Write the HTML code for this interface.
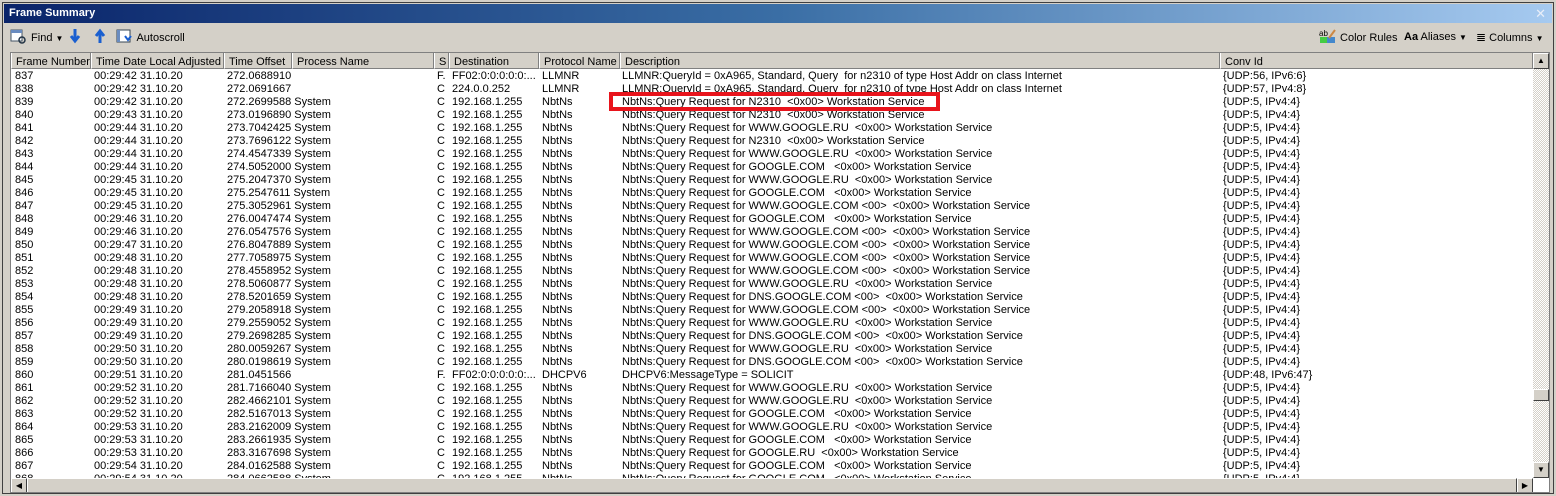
<!DOCTYPE html>
<html><head><meta charset="utf-8"><style>
*{margin:0;padding:0;box-sizing:border-box}
body{width:1556px;height:496px;background:#d4d0c8;font-family:"Liberation Sans",Tahoma,sans-serif;font-size:11px;color:#000;position:relative;overflow:hidden}
.outer{position:absolute;left:2px;top:2px;width:1552px;height:492px;border:1px solid #404040;background:#d4d0c8}
.title{position:absolute;left:4px;top:4px;width:1548px;height:19px;background:linear-gradient(to right,#0a246a,#3a6ea5 50%,#a6caf0);color:#fff;font-weight:bold;font-size:11px;line-height:19px;padding-left:5px}
.title .x{position:absolute;right:6px;top:0;font-weight:normal;font-size:13px;color:#e8eef8}
.tb{position:absolute;top:28px;height:18px;line-height:18px;font-size:11px}
.grid{position:absolute;left:10px;top:52px;width:1540px;height:441px;border:1px solid #808080;background:#fff;overflow:hidden}
.hdr{position:absolute;left:0;top:0;height:16px;width:1522px;background:#d4d0c8}
.hc{position:absolute;top:0;height:16px;line-height:18px;padding-left:4px;border-left:1px solid #fff;border-right:1px solid #808080;border-bottom:1px solid #808080;white-space:nowrap;overflow:hidden}
.row{position:absolute;left:0;height:13px;line-height:13px;white-space:nowrap}
.row span{position:absolute;top:0;white-space:nowrap}
.vs{position:absolute;left:1522px;top:0;width:16px;height:425px;background:repeating-conic-gradient(#d4d0c8 0 25%,#fff 0 50%) 0 0/2px 2px}
.btn{position:absolute;width:16px;height:16px;background:#d4d0c8;border:1px solid;border-color:#fff #404040 #404040 #fff}
.hs{position:absolute;left:0;top:425px;width:1522px;height:16px;background:#d4d0c8}
.red{position:absolute;left:609px;top:92px;width:331px;height:19px;border:4px solid #e8141c}
</style></head><body>
<div class="outer"></div>
<div class="title">Frame Summary<span class="x">✕</span></div>
<div class="tb" style="left:10px"><svg width="18" height="16" style="vertical-align:-3px"><rect x="1" y="2" width="11" height="11" fill="#fff" stroke="#456"/><rect x="1" y="2" width="11" height="3" fill="#6a8cc0"/><circle cx="12" cy="12" r="3" fill="none" stroke="#234" stroke-width="1.5"/></svg> Find <span style="font-size:8px">▼</span></div>
<div class="tb" style="left:68px"><svg width="14" height="16"><path d="M7 1v11M3 8l4 5 4-5" stroke="#1a5fd0" stroke-width="3" fill="none"/></svg></div>
<div class="tb" style="left:93px"><svg width="14" height="16"><path d="M7 15V4M3 8l4-5 4 5" stroke="#1a5fd0" stroke-width="3" fill="none"/></svg></div>
<div class="tb" style="left:116px"><svg width="18" height="16" style="vertical-align:-3px"><rect x="1" y="2" width="13" height="12" fill="#fff" stroke="#345"/><rect x="1" y="2" width="3" height="12" fill="#6a8cc0"/><path d="M9 8l3 4 3-4" stroke="#1a5fd0" stroke-width="2" fill="none"/></svg> Autoscroll</div>
<div class="tb" style="left:1319px"><svg width="18" height="16" style="vertical-align:-3px"><text x="0" y="8" font-size="8" fill="#000">ab</text><rect x="1" y="9" width="7" height="6" fill="#4c4"/><rect x="8" y="9" width="8" height="6" fill="#48c"/><path d="M10 10l6-8" stroke="#c84" stroke-width="2"/></svg> Color Rules</div>
<div class="tb" style="left:1404px"><span style="font-weight:bold;font-size:11px">Aa</span> Aliases <span style="font-size:8px">▼</span></div>
<div class="tb" style="left:1476px"><span style="font-size:12px">≣</span> Columns <span style="font-size:8px">▼</span></div>
<div class="grid">
<div class="hdr">
<div class="hc" style="left:0;width:80px">Frame Number</div>
<div class="hc" style="left:80px;width:133px">Time Date Local Adjusted</div>
<div class="hc" style="left:213px;width:68px">Time Offset</div>
<div class="hc" style="left:281px;width:142px">Process Name</div>
<div class="hc" style="left:423px;width:15px">S</div>
<div class="hc" style="left:438px;width:90px">Destination</div>
<div class="hc" style="left:528px;width:81px">Protocol Name</div>
<div class="hc" style="left:609px;width:600px">Description</div>
<div class="hc" style="left:1209px;width:313px">Conv Id</div>
</div>
<div id="rows"></div>
<div class="vs"><div class="btn" style="top:0;left:0;font-size:8px;text-align:center;line-height:14px">▲</div><div class="btn" style="top:336px;left:0;height:12px"></div><div class="btn" style="top:409px;left:0;font-size:8px;text-align:center;line-height:14px">▼</div></div>
<div class="hs"><div class="btn" style="left:0;top:0;font-size:8px;text-align:center;line-height:14px">◀</div><div class="btn" style="left:16px;top:0;width:1490px"></div><div class="btn" style="left:1506px;top:0;font-size:8px;text-align:center;line-height:14px">▶</div></div>
</div>
<div class="red"></div>
<script>
var L="LLMNR:QueryId = 0xA965, Standard, Query  for n2310 of type Host Addr on class Internet";
function q(n){return "NbtNs:Query Request for "+n+"  <0x00> Workstation Service";}
var d=[
["837","42","272.0688910","","F.","FF02:0:0:0:0:0:...","LLMNR",L,"{UDP:56, IPv6:6}"],
["838","42","272.0691667","","C","224.0.0.252","LLMNR",L,"{UDP:57, IPv4:8}"]];
var n=[["839","42","272.2699588","N2310"],["840","43","273.0196890","N2310"],["841","44","273.7042425","WWW.GOOGLE.RU"],["842","44","273.7696122","N2310"],["843","44","274.4547339","WWW.GOOGLE.RU"],["844","44","274.5052000","GOOGLE.COM "],["845","45","275.2047370","WWW.GOOGLE.RU"],["846","45","275.2547611","GOOGLE.COM "],["847","45","275.3052961","WWW.GOOGLE.COM <00>"],["848","46","276.0047474","GOOGLE.COM "],["849","46","276.0547576","WWW.GOOGLE.COM <00>"],["850","47","276.8047889","WWW.GOOGLE.COM <00>"],["851","48","277.7058975","WWW.GOOGLE.COM <00>"],["852","48","278.4558952","WWW.GOOGLE.COM <00>"],["853","48","278.5060877","WWW.GOOGLE.RU"],["854","48","278.5201659","DNS.GOOGLE.COM <00>"],["855","49","279.2058918","WWW.GOOGLE.COM <00>"],["856","49","279.2559052","WWW.GOOGLE.RU"],["857","49","279.2698285","DNS.GOOGLE.COM <00>"],["858","50","280.0059267","WWW.GOOGLE.RU"],["859","50","280.0198619","DNS.GOOGLE.COM <00>"],null,["861","52","281.7166040","WWW.GOOGLE.RU"],["862","52","282.4662101","WWW.GOOGLE.RU"],["863","52","282.5167013","GOOGLE.COM "],["864","53","283.2162009","WWW.GOOGLE.RU"],["865","53","283.2661935","GOOGLE.COM "],["866","53","283.3167698","GOOGLE.RU"],["867","54","284.0162588","GOOGLE.COM "],["868","54","284.0662588","GOOGLE.COM "]];
n.forEach(function(r){if(!r)d.push(["860","51","281.0451566","","F.","FF02:0:0:0:0:0:...","DHCPV6","DHCPV6:MessageType = SOLICIT","{UDP:48, IPv6:47}"]);else d.push([r[0],r[1],r[2],"System","C","192.168.1.255","NbtNs",q(r[3]),"{UDP:5, IPv4:4}"]);});
var xs=[4,83,216,283,426,441,531,611,1212],h="";
d.forEach(function(r,i){h+='<div class="row" style="top:'+(17+i*13)+'px">';
var c=[r[0],"00:29:"+r[1]+" 31.10.20",r[2]+(r[3]?" "+r[3]:""),"",r[4],r[5],r[6],r[7],r[8]];
c.forEach(function(t,j){if(t)h+='<span style="left:'+xs[j]+'px'+(j==5?';width:86px;overflow:hidden':'')+'">'+t.replace(/</g,"&lt;").replace(/>/g,"&gt;").replace(/  /g," &nbsp;")+'</span>';});
h+='</div>';});
document.getElementById("rows").innerHTML=h;
</script>
</body></html>
